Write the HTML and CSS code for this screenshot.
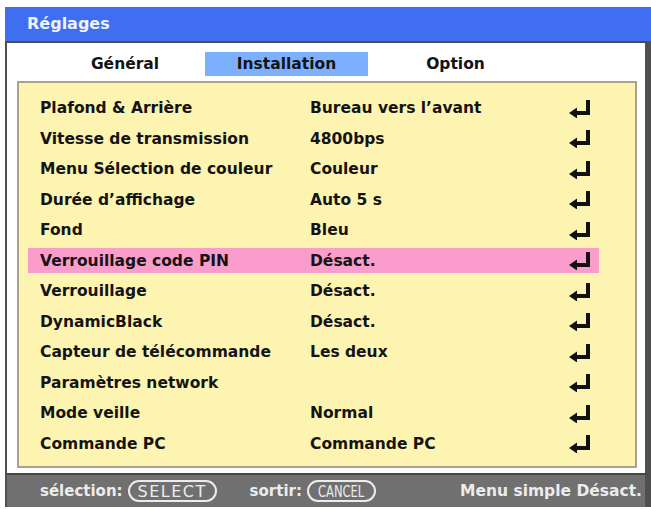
FILE: index.html
```html
<!DOCTYPE html>
<html lang="fr">
<head>
<meta charset="utf-8">
<title>Réglages</title>
<link rel="stylesheet" href="styles.css">
</head>
<body>
<div class="window">
  <div class="titlebar">Réglages</div>
  <div class="content">
    <div class="tabs">
      <div class="tab tab-general">Général</div>
      <div class="tab tab-active">Installation</div>
      <div class="tab tab-option">Option</div>
    </div>
    <div class="panel">
      <div class="row"><span class="label">Plafond &amp; Arrière</span><span class="value">Bureau vers l’avant</span><svg class="enter" viewBox="0 0 22 19"><path d="M17 1h4v15H7v-4h10z"/><path d="M0 14L8 8.5v11z"/></svg></div>
      <div class="row"><span class="label">Vitesse de transmission</span><span class="value">4800bps</span><svg class="enter" viewBox="0 0 22 19"><path d="M17 1h4v15H7v-4h10z"/><path d="M0 14L8 8.5v11z"/></svg></div>
      <div class="row"><span class="label">Menu Sélection de couleur</span><span class="value">Couleur</span><svg class="enter" viewBox="0 0 22 19"><path d="M17 1h4v15H7v-4h10z"/><path d="M0 14L8 8.5v11z"/></svg></div>
      <div class="row"><span class="label">Durée d’affichage</span><span class="value">Auto 5 s</span><svg class="enter" viewBox="0 0 22 19"><path d="M17 1h4v15H7v-4h10z"/><path d="M0 14L8 8.5v11z"/></svg></div>
      <div class="row"><span class="label">Fond</span><span class="value">Bleu</span><svg class="enter" viewBox="0 0 22 19"><path d="M17 1h4v15H7v-4h10z"/><path d="M0 14L8 8.5v11z"/></svg></div>
      <div class="row selected"><span class="label">Verrouillage code PIN</span><span class="value">Désact.</span><svg class="enter" viewBox="0 0 22 19"><path d="M17 1h4v15H7v-4h10z"/><path d="M0 14L8 8.5v11z"/></svg></div>
      <div class="row"><span class="label">Verrouillage</span><span class="value">Désact.</span><svg class="enter" viewBox="0 0 22 19"><path d="M17 1h4v15H7v-4h10z"/><path d="M0 14L8 8.5v11z"/></svg></div>
      <div class="row"><span class="label">DynamicBlack</span><span class="value">Désact.</span><svg class="enter" viewBox="0 0 22 19"><path d="M17 1h4v15H7v-4h10z"/><path d="M0 14L8 8.5v11z"/></svg></div>
      <div class="row"><span class="label">Capteur de télécommande</span><span class="value">Les deux</span><svg class="enter" viewBox="0 0 22 19"><path d="M17 1h4v15H7v-4h10z"/><path d="M0 14L8 8.5v11z"/></svg></div>
      <div class="row"><span class="label">Paramètres network</span><span class="value"></span><svg class="enter" viewBox="0 0 22 19"><path d="M17 1h4v15H7v-4h10z"/><path d="M0 14L8 8.5v11z"/></svg></div>
      <div class="row"><span class="label">Mode veille</span><span class="value">Normal</span><svg class="enter" viewBox="0 0 22 19"><path d="M17 1h4v15H7v-4h10z"/><path d="M0 14L8 8.5v11z"/></svg></div>
      <div class="row"><span class="label">Commande PC</span><span class="value">Commande PC</span><svg class="enter" viewBox="0 0 22 19"><path d="M17 1h4v15H7v-4h10z"/><path d="M0 14L8 8.5v11z"/></svg></div>
    </div>
  </div>
  <div class="footer">
    <span class="hint">sélection:</span>
    <span class="pill pill-select">SELECT</span>
    <span class="hint hint-exit">sortir:</span>
    <span class="pill pill-cancel"><span class="narrow">CANCEL</span></span>
    <span class="status">Menu simple Désact.</span>
  </div>
</div>
</body>
</html>
```
FILE: styles.css
```css
html, body {
  margin: 0;
  padding: 0;
  background: #ffffff;
}

body {
  font-family: "DejaVu Sans", "Verdana", sans-serif;
  font-weight: bold;
  color: #141414;
}

.window {
  margin: 7px 0 0 5px;
  width: 646px;
}

.titlebar {
  height: 34px;
  line-height: 34px;
  background: #3f6ff0;
  color: #eef3ff;
  font-size: 16px;
  padding-left: 22px;
  box-sizing: border-box;
}

.content {
  background: #ffffff;
  border-top: 2px solid #4d4d4d;
  border-left: 2px solid #505050;
  border-right: 6px solid #505050;
  padding: 9px 8px 5px 10px;
}

.tabs {
  display: flex;
  height: 24px;
  padding-left: 28px;
  margin-bottom: 5px;
}

.tab {
  font-size: 15.5px;
  line-height: 24px;
  text-align: center;
  color: #141414;
}

.tab-general { width: 160px; }
.tab-active { width: 163px; background: #7cb0ff; }
.tab-option { width: 163px; margin-left: 6px; }

.panel {
  background: #fdf4b1;
  border: 2px solid #a7a38a;
  padding: 10px 36px 7px 9px;
}

.row {
  display: grid;
  grid-template-columns: 270px 259px 22px;
  align-items: center;
  height: 30.5px;
  padding: 0 8px 0 12px;
  font-size: 15.5px;
}

.row.selected {
  background: linear-gradient(to bottom, transparent 2px, #fa9dcd 2px, #fa9dcd calc(100% - 2.5px), transparent calc(100% - 2.5px));
}

.label, .value {
  white-space: nowrap;
}

.enter {
  width: 22px;
  height: 19px;
  fill: #111111;
}

.footer {
  display: flex;
  align-items: center;
  height: 32px;
  background: #707070;
  border-top: 2px solid #464646;
  border-left: 2px solid #505050;
  border-right: 6px solid #505050;
  color: #ececec;
  font-size: 15px;
  padding-left: 33px;
  padding-right: 3px;
}

.hint-exit {
  margin-left: 33px;
}

.pill {
  display: inline-flex;
  align-items: center;
  justify-content: center;
  height: 18px;
  border: 2px solid #ececec;
  border-radius: 11px;
  box-sizing: content-box;
  font-size: 15px;
  margin-left: 5px;
  color: #ececec;
}

.pill-select {
  width: 85px;
  letter-spacing: 1.5px;
  font-weight: normal;
  font-size: 16px;
}

.pill-cancel {
  width: 65px;
  overflow: hidden;
}

.narrow {
  display: inline-block;
  transform: scaleX(0.72);
  font-weight: normal;
  font-size: 16px;
}

.status {
  margin-left: auto;
  font-size: 15.5px;
}
```
